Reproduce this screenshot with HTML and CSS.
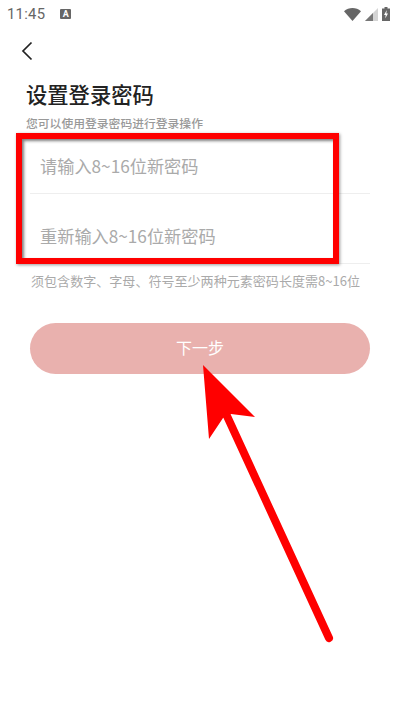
FILE: index.html
```html
<!DOCTYPE html>
<html lang="zh-CN">
<head>
    <meta charset="UTF-8">
    <meta name="viewport" content="width=device-width, initial-scale=1.0">
    <title>设置登录密码</title>
    <link rel="stylesheet" href="styles.css">
</head>
<body>
    <div class="screen">
        <div class="status-bar">
            <span class="status-time">11:45</span>
            <span class="status-badge">A</span>
            <div class="status-icons">
                <svg class="icon-wifi" width="17" height="13" viewBox="0 0 17 13">
                    <path d="M0 3.2 C4.8 -1 12.2 -1 17 3.2 L8.5 13 Z" fill="#666"/>
                </svg>
                <svg class="icon-signal" width="13" height="13" viewBox="0 0 13 13">
                    <path d="M13 0 V13 H0 Z" fill="#d4d4d4"/>
                    <path d="M8 5 V13 H0 Z" fill="#777"/>
                </svg>
                <svg class="icon-battery" width="8" height="14" viewBox="0 0 8 14">
                    <path d="M2.5 0 H5.5 V1.5 H8 V14 H0 V1.5 H2.5 Z" fill="#666"/>
                    <path d="M4.8 3 L2 8 H3.7 L3.2 11.5 L6 6.5 H4.3 Z" fill="#fff"/>
                </svg>
            </div>
        </div>

        <div class="nav-row">
            <svg width="12" height="20" viewBox="0 0 12 20">
                <path d="M10.5 1.5 L2 10 L10.5 18.5" fill="none" stroke="#222" stroke-width="1.7"/>
            </svg>
        </div>

        <h1 class="page-title">设置登录密码</h1>
        <p class="page-sub">您可以使用登录密码进行登录操作</p>

        <div class="form">
            <div class="field">请输入8~16位新密码</div>
            <div class="field">重新输入8~16位新密码</div>
            <p class="hint">须包含数字、字母、符号至少两种元素密码长度需8~16位</p>
            <button class="next-btn">下一步</button>
        </div>

        <!-- Annotations drawn on top of the screenshot -->
        <div class="mark-box"></div>
        <svg class="mark-arrow" width="400" height="710" viewBox="0 0 400 710">
            <path d="M329 638 L227 416" fill="none" stroke="#ff0000" stroke-width="8" stroke-linecap="round"/>
            <path d="M203 365 L255 417 L231 414 L223 418 L209 439 Z" fill="#ff0000"/>
        </svg>
    </div>
</body>
</html>
```

FILE: styles.css
```css
body, html {
    margin: 0;
    padding: 0;
    width: 100%;
    height: 100%;
    background: #fff;
    font-family: "Noto Sans CJK SC", "Roboto", sans-serif;
    overflow: hidden;
}

.screen {
    position: relative;
    width: 400px;
    height: 710px;
    overflow: hidden;
}

/* Status bar */
.status-bar {
    display: flex;
    align-items: center;
    height: 28px;
    padding: 0 10px 0 7px;
    color: #666;
}

.status-time {
    font-family: "Roboto", sans-serif;
    font-size: 14.8px;
    letter-spacing: 0.3px;
}

.status-badge {
    width: 11px;
    height: 10px;
    margin-left: 15px;
    background: #666;
    border-radius: 1px;
    color: #fff;
    font-family: "Roboto", sans-serif;
    font-size: 9px;
    font-weight: 700;
    line-height: 10px;
    text-align: center;
}

.status-icons {
    display: flex;
    align-items: center;
    gap: 4px;
    margin-left: auto;
}

/* Back arrow */
.nav-row {
    display: flex;
    align-items: center;
    height: 20px;
    margin-top: 13px;
    padding-left: 21px;
}

.page-title {
    margin: 18px 0 0 26px;
    color: #222;
    font-size: 21.3px;
    font-weight: 500;
    line-height: 30px;
}

.page-sub {
    margin: 6px 0 0 26px;
    color: #999;
    font-size: 11.8px;
    font-weight: 500;
    line-height: 16px;
}

/* Form */
.form {
    display: flex;
    flex-direction: column;
    margin: -7px 30px 0;
}

.field {
    display: flex;
    align-items: center;
    box-sizing: border-box;
    height: 70px;
    padding: 14px 0 0 10px;
    border-bottom: 1px solid #eee;
    color: #aaa;
    font-size: 17.2px;
}

.hint {
    margin: 8px 0 0 1px;
    color: #aaa;
    font-size: 13.05px;
    line-height: 18px;
    white-space: nowrap;
}

.next-btn {
    height: 51px;
    margin-top: 33px;
    padding-bottom: 4px;
    border: none;
    border-radius: 26px;
    background: #e9b1ae;
    color: #fff;
    font-family: inherit;
    font-size: 16px;
}

/* Red annotation marks */
.mark-box {
    position: absolute;
    left: 16px;
    top: 133px;
    width: 311px;
    height: 119px;
    border: 6.5px solid #ff0000;
    box-shadow: 1px 1px 3px rgba(0, 0, 0, 0.4), inset 2px 2px 3px rgba(0, 0, 0, 0.5);
}

.mark-arrow {
    position: absolute;
    left: 0;
    top: 0;
}
```
